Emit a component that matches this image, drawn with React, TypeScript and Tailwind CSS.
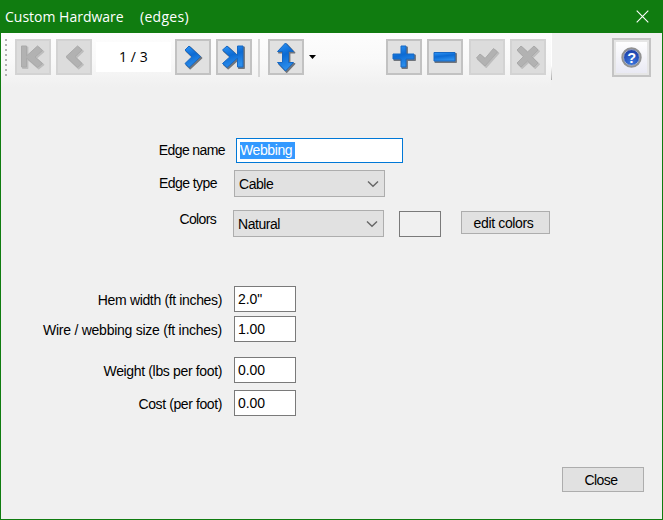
import type { ReactNode } from "react";

const label = "block text-right text-[14px] leading-[18px] whitespace-nowrap";

function ToolButton({ children, disabled, className = "" }: { children: ReactNode; disabled?: boolean; className?: string }) {
  return (
    <button
      className={`h-9 w-9 shrink-0 border-2 ${disabled ? "border-[#d3d3d3] bg-[#dcdcdc]" : "border-[#c2c2c2] bg-[#e1e1e1]"} ${className}`}
    >
      <svg viewBox="0 0 32 32" width="32" height="32" className="block">
        {children}
      </svg>
    </button>
  );
}

function Glyph({ d, disabled }: { d: string; disabled?: boolean }) {
  const shade = disabled ? "#bdbdbd" : "#70757c";
  return (
    <>
      <path d={d} transform="translate(1.2 1.2)" fill={shade} stroke={shade} strokeWidth="1.4" strokeLinejoin="round" filter="url(#soft)" />
      <path
        d={d}
        fill={disabled ? "#b2b2b2" : "url(#blue)"}
        stroke={disabled ? "#aaaaaa" : "#1668c4"}
        strokeWidth="1"
        strokeLinejoin="round"
      />
    </>
  );
}

function Select({ value, className }: { value: string; className: string }) {
  return (
    <div className={`flex h-[27px] w-[151px] items-center justify-between border border-[#adadad] bg-[#e1e1e1] pr-[5px] pl-1 ${className}`}>
      <span className="text-[14px] leading-[18px] tracking-[-0.45px]">{value}</span>
      <svg width="12" height="8" viewBox="0 0 12 8">
        <path d="M1 1.5 L6 6.3 L11 1.5" fill="none" stroke="#666" strokeWidth="1.4" />
      </svg>
    </div>
  );
}

function NumberRow({ text, value, tracking, className }: { text: string; value: string; tracking: string; className: string }) {
  return (
    <div className={`flex h-[26px] items-start ${className}`}>
      <span className={`${label} ${tracking} w-[221px] pt-[5px]`}>{text}</span>
      <div className="ml-[12px] h-[26px] w-[62px] border border-[#7a7a7a] bg-white pt-[3px] pl-[3px] text-[14px] leading-[18px] tracking-[-0.1px]">
        {value}
      </div>
    </div>
  );
}

export default function App() {
  return (
    <div className="flex h-[520px] w-[663px] flex-col overflow-hidden border border-[#107c10] bg-[#f0f0f0] font-['Liberation_Sans',sans-serif] text-black">
      <svg width="0" height="0" className="absolute">
        <defs>
          <filter id="soft" x="-20%" y="-20%" width="140%" height="140%">
            <feGaussianBlur stdDeviation="0.7" />
          </filter>
          <linearGradient id="blue" x1="0" y1="0" x2="0.3" y2="1">
            <stop offset="0" stopColor="#2f96f8" />
            <stop offset="0.5" stopColor="#0c6bd4" />
            <stop offset="1" stopColor="#2b8eec" />
          </linearGradient>
          <radialGradient id="help" cx="0.5" cy="0.75" r="0.75">
            <stop offset="0" stopColor="#3c78e0" />
            <stop offset="1" stopColor="#1535a0" />
          </radialGradient>
        </defs>
      </svg>

      <header className="flex h-8 shrink-0 items-center bg-[#107c10] pr-[13px] pl-1 font-['Open_Sans',sans-serif] text-[14px] leading-5 text-white">
        <span className="w-[135px] tracking-[0px]">Custom Hardware</span>
        <span className="tracking-[0.3px]">(edges)</span>
        <svg width="13" height="13" viewBox="0 0 13 13" className="mb-px ml-auto">
          <path d="M0.7 0.7 L12.3 12.3 M12.3 0.7 L0.7 12.3" stroke="white" strokeWidth="1.1" />
        </svg>
      </header>

      <div className="flex h-[54px] shrink-0 items-start">
        <div className="flex h-[54px] w-[550px] items-start bg-linear-to-b from-[#fdfdfd] via-[#f9f9f9] to-[#f0f0f0] pt-[6px]">
          <svg width="4" height="40" viewBox="0 0 4 40" className="ml-[3px]">
            {[0, 5, 10, 15, 20, 25, 30, 35].map((y) => (
              <rect key={y} x="1" y={y} width="2" height="2" fill="#b0b0b0" />
            ))}
          </svg>
          <ToolButton disabled className="ml-[7px]">
            <Glyph disabled d="M4.5 5 H9.5 V15 L20.5 5 L25.5 9.5 L18 16 L25.5 22.5 L20.5 26.5 L9.5 17 V26 H4.5 Z" />
          </ToolButton>
          <ToolButton disabled className="ml-[5px]">
            <Glyph disabled d="M19.5 5 L24 9 L17 15.7 L24 22.5 L19.5 26.5 L8 15.7 Z" />
          </ToolButton>
          <div className="mt-[3px] ml-1 flex h-[30px] w-[75px] items-center justify-center bg-white pb-[1px] font-['Open_Sans',sans-serif] text-[14px] tracking-[0.1px]">
            1 / 3
          </div>
          <ToolButton className="ml-1">
            <Glyph d="M12 5 L23.5 15.7 L12 26.5 L8 22.5 L15 15.7 L8 9 Z" />
          </ToolButton>
          <ToolButton className="ml-[5px]">
            <Glyph d="M9 5 L19.5 14.5 V5 H25 V26 H19.5 V17 L9 26.5 L4.5 22.5 L12 15.7 L4.5 9 Z" />
          </ToolButton>
          <div className="ml-1.5 h-[38px] w-[2px] bg-[#d6d6d6]" />
          <ToolButton className="ml-2">
            <Glyph d="M15.5 2 L23.5 10.5 H18.5 V21.5 H23.5 L15.5 30 L7.5 21.5 H12.5 V10.5 H7.5 Z" />
          </ToolButton>
          <svg width="7" height="4" viewBox="0 0 7 4" className="mt-[16px] ml-[5px]">
            <path d="M0 0 H7 L3.5 4 Z" fill="black" />
          </svg>
          <ToolButton className="ml-[70px]">
            <Glyph d="M13 5 H18 V13 H26 V18 H18 V26 H13 V18 H5 V13 H13 Z" />
          </ToolButton>
          <ToolButton className="ml-[5px]">
            <Glyph d="M5 11.5 H26 V20 H5 Z" />
          </ToolButton>
          <ToolButton disabled className="ml-[6px]">
            <Glyph disabled d="M9 13 L14 17.5 L22.5 7.5 L26.5 11 L14 25 L5.5 17 Z" />
          </ToolButton>
          <ToolButton disabled className="ml-[5px]">
            <Glyph disabled d="M9 5 L15.5 11 L22 5 L26 9 L19.5 15.5 L26 22 L22 26 L15.5 20 L9 26 L5 22 L11.5 15.5 L5 9 Z" />
          </ToolButton>
        </div>
        <div className="h-[47px] w-px bg-linear-to-b from-white from-70% to-[#aaa]" />
        <button className="mt-[5px] ml-[60px] flex h-[39px] w-[39px] items-center justify-center border-2 border-[#c4c4c4] bg-linear-to-b from-white to-[#e8e8f3] shadow-[inset_0_0_0_2px_#e6e6e6]">
          <svg width="21" height="21" viewBox="0 0 21 21">
            <circle cx="10.5" cy="10.5" r="9.2" fill="url(#help)" stroke="#929292" strokeWidth="2" />
            <circle cx="10.5" cy="10.5" r="7.9" fill="none" stroke="#cfcfcf" strokeWidth="0.7" />
            <text x="10.6" y="15.7" textAnchor="middle" fontSize="14.5" fontWeight="bold" fill="white" fontFamily="Liberation Sans">?</text>
          </svg>
        </button>
      </div>

      <main className="flex flex-1 flex-col pt-[51px]">
        <div className="flex h-[25px] items-start">
          <span className={`${label} w-[224px] pt-[3px] tracking-[-0.6px]`}>Edge name</span>
          <div className="ml-[11px] h-[25px] w-[167px] border border-[#0078d7] bg-white pt-[3px] pl-[3px]">
            <span className="block h-[17px] w-[55px] bg-[#3399ff] text-[14px] leading-[17px] tracking-[-0.4px] text-white">Webbing</span>
          </div>
        </div>
        <div className="mt-[7px] flex h-[27px] items-start">
          <span className={`${label} w-[216px] pt-1 tracking-[-0.55px]`}>Edge type</span>
          <Select value="Cable" className="ml-[17px]" />
        </div>
        <div className="mt-[13px] flex h-[27px] items-start">
          <span className={`${label} w-[215px] tracking-[-0.65px]`}>Colors</span>
          <Select value="Natural" className="ml-[17px]" />
          <div className="mt-[1px] ml-[15px] h-[26px] w-[42px] border border-[#7a7a7a]" />
          <button className="mt-[1px] ml-[20px] h-[23px] w-[89px] border border-[#adadad] bg-[#e1e1e1] pt-[1px] pr-1 text-[14px] leading-[18px] tracking-[-0.35px]">edit colors</button>
        </div>

        <NumberRow text="Hem width (ft inches)" value={'2.0"'} tracking="tracking-[-0.35px]" className="mt-[49px]" />
        <NumberRow text="Wire / webbing size (ft inches)" value="1.00" tracking="tracking-[-0.25px]" className="mt-1" />
        <NumberRow text="Weight (lbs per foot)" value="0.00" tracking="tracking-[-0.35px]" className="mt-[15px]" />
        <NumberRow text="Cost (per foot)" value="0.00" tracking="tracking-[-0.4px]" className="mt-[7px]" />

        <button className="mt-auto mr-[18px] mb-[27px] h-[25px] w-[82px] self-end border border-[#adadad] bg-[#e1e1e1] pr-1 text-[14px] leading-[18px] tracking-[-0.6px]">
          Close
        </button>
      </main>
    </div>
  );
}
